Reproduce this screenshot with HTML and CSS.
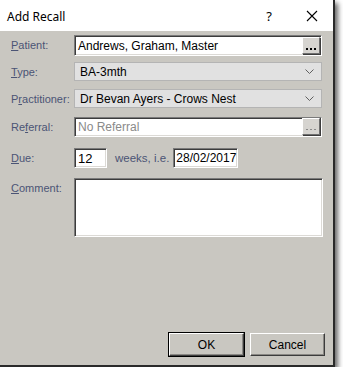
FILE: index.html
```html
<!DOCTYPE html>
<html lang="en">
<head>
    <meta charset="UTF-8">
    <title>Add Recall</title>
    <link rel="stylesheet" href="styles.css">
</head>
<body>

    <div class="window">
        <div class="titlebar">
            <span class="title">Add Recall</span>
            <span class="help">?</span>
            <svg class="close" width="12" height="12" viewBox="0 0 12 12">
                <path d="M1 1 L11 11 M11 1 L1 11" stroke="#000" stroke-width="1.1" fill="none"/>
            </svg>
        </div>

        <div class="body">
            <div class="form">
                <div class="row row-patient">
                    <label><u>P</u>atient:</label>
                    <div class="field sunken">
                        <span class="value">Andrews, Graham, Master</span>
                        <span class="dots-btn">
                            <svg width="16" height="15" viewBox="0 0 16 15">
                                <rect x="3" y="10" width="2" height="2" fill="#000"/>
                                <rect x="7" y="10" width="2" height="2" fill="#000"/>
                                <rect x="11" y="10" width="2" height="2" fill="#000"/>
                            </svg>
                        </span>
                    </div>
                </div>

                <div class="row row-type">
                    <label><u>T</u>ype:</label>
                    <div class="field combo">
                        <span class="value">BA-3mth</span>
                        <svg class="chevron" width="9" height="5" viewBox="0 0 9 5">
                            <path d="M0.5 0.5 L4.5 4.5 L8.5 0.5" stroke="#606060" fill="none"/>
                        </svg>
                    </div>
                </div>

                <div class="row row-prac">
                    <label>P<u>r</u>actitioner:</label>
                    <div class="field combo">
                        <span class="value">Dr Bevan Ayers - Crows Nest</span>
                        <svg class="chevron" width="9" height="5" viewBox="0 0 9 5">
                            <path d="M0.5 0.5 L4.5 4.5 L8.5 0.5" stroke="#606060" fill="none"/>
                        </svg>
                    </div>
                </div>

                <div class="row row-ref">
                    <label>Re<u>f</u>erral:</label>
                    <div class="field sunken">
                        <span class="value disabled">No Referral</span>
                        <span class="dots-btn">
                            <svg width="16" height="15" viewBox="0 0 16 15">
                                <rect x="3" y="10" width="2" height="1" fill="#8a8a8a"/>
                                <rect x="7" y="10" width="2" height="1" fill="#8a8a8a"/>
                                <rect x="11" y="10" width="2" height="1" fill="#8a8a8a"/>
                            </svg>
                        </span>
                    </div>
                </div>

                <div class="row row-due">
                    <label><u>D</u>ue:</label>
                    <div class="due-group">
                        <div class="field sunken small">
                            <span class="value big">12</span>
                        </div>
                        <span class="weeks">weeks, i.e.</span>
                        <div class="field sunken date">
                            <span class="value">28/02/2017</span>
                        </div>
                    </div>
                </div>

                <div class="row row-comment">
                    <label><u>C</u>omment:</label>
                    <div class="field sunken comment"></div>
                </div>
            </div>

            <div class="buttons">
                <button class="btn default">OK</button>
                <button class="btn">Cancel</button>
            </div>
        </div>
    </div>

</body>
</html>
```

FILE: styles.css
```css
body {
    margin: 0;
    padding: 0;
    background: #ffffff;
    font-family: 'Liberation Sans', Arial, sans-serif;
    font-size: 11px;
}

.window {
    width: 333px;
    height: 365px;
    background: #c9c7c1;
    border-right: 2px solid #2a2a2a;
    border-bottom: 2px solid #2a2a2a;
    box-shadow: 3px 3px 5px rgba(0, 0, 0, 0.6);
    display: flex;
    flex-direction: column;
}

.titlebar {
    height: 31px;
    background: #ffffff;
    display: flex;
    align-items: center;
    padding-left: 7px;
    flex-shrink: 0;
}

.title {
    font-family: 'Noto Sans', 'Open Sans', sans-serif;
    font-size: 12px;
    color: #000;
    flex: 1;
    padding-top: 1px;
}

.help {
    font-family: 'Noto Sans', sans-serif;
    font-size: 13px;
    margin-right: 34px;
}

.close {
    margin-right: 15px;
}

.body {
    flex: 1;
    display: flex;
    flex-direction: column;
    padding: 4px 0 9px 11px;
}

.form {
    flex: 1;
}

.row {
    display: flex;
    align-items: flex-start;
}

.row label {
    width: 63px;
    color: #4b5475;
    padding-top: 4px;
    flex-shrink: 0;
}

.row-patient { height: 21px; }
.row-type { margin-top: 6px; height: 19px; }
.row-prac { margin-top: 8px; height: 19px; }
.row-ref { margin-top: 9px; height: 20px; }
.row-due { margin-top: 11px; height: 20px; }
.row-comment { margin-top: 10px; }

.field {
    box-sizing: border-box;
    width: 248px;
    height: 100%;
    display: flex;
    align-items: center;
}

.sunken {
    background: #ffffff;
    border: 1px solid;
    border-color: #7a7a7a #ffffff #ffffff #7a7a7a;
    box-shadow: inset 1px 1px 0 #3c3c3c, inset -1px -1px 0 #dcdad6;
}

.combo {
    background: #e1e1e1;
    border: 1px solid #b4b4b4;
}

.value {
    flex: 1;
    padding-left: 3px;
    color: #000;
    font-size: 12px;
    white-space: nowrap;
}

.combo .value {
    padding-left: 5px;
}

.value.disabled {
    color: #8a8a8a;
}

.value.big {
    font-size: 13px;
}

.chevron {
    margin-right: 7px;
}

.dots-btn {
    box-sizing: border-box;
    width: 18px;
    height: 17px;
    margin-right: 1px;
    margin-bottom: 1px;
    background: #d6d4d0;
    border: 1px solid;
    border-color: #ffffff #6e6e6e #6e6e6e #ffffff;
    box-shadow: 1px 1px 0 #3c3c3c;
    display: flex;
}

.due-group {
    display: flex;
    align-items: center;
    height: 100%;
}

.field.small {
    width: 33px;
}

.weeks {
    color: #4b5475;
    font-size: 11.5px;
    margin-left: 8px;
    margin-right: 4px;
}

.field.date {
    width: 65px;
}

.field.date .value {
    padding-left: 2px;
}

.field.comment {
    height: 59px;
    width: 249px;
}

.buttons {
    display: flex;
    justify-content: flex-end;
    gap: 6px;
    padding-right: 8px;
}

.btn {
    box-sizing: border-box;
    width: 75px;
    height: 23px;
    background: #c9c7c1;
    border: 1px solid;
    border-color: #ffffff #3c3c3c #3c3c3c #ffffff;
    box-shadow: inset -1px -1px 0 #8a8884;
    font-family: 'Liberation Sans', Arial, sans-serif;
    font-size: 12px;
    color: #000;
    padding: 0;
}

.btn.default {
    outline: 1px solid #000;
    outline-offset: 0;
}
```
